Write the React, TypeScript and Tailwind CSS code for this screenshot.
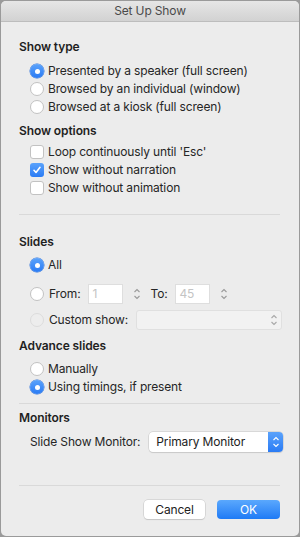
import React from 'react';

const font = { fontFamily: 'Inter, "Noto Sans", sans-serif' };

const Radio = ({ on, dim }: { on?: boolean; dim?: boolean }) =>
  on ? (
    <span className="w-[14px] h-[14px] rounded-full bg-gradient-to-b from-[#5aa2fb] to-[#2a7bf4] flex items-center justify-center shrink-0 shadow-[0_0_0_0.5px_#2a6fd8]">
      <span className="w-[5px] h-[5px] rounded-full bg-white" />
    </span>
  ) : (
    <span
      className={`w-[14px] h-[14px] rounded-full shrink-0 border ${dim ? 'bg-[#ededed] border-[#dcdcdc]' : 'bg-white border-[#c2c2c2]'}`}
    />
  );

const Check = ({ on }: { on?: boolean }) =>
  on ? (
    <span className="w-[14px] h-[14px] rounded-[3px] bg-gradient-to-b from-[#5aa2fb] to-[#2a7bf4] flex items-center justify-center shrink-0">
      <svg width="10" height="10" viewBox="0 0 10 10">
        <path d="M2 5.3 L4 7.5 L8 2.3" stroke="white" strokeWidth="1.6" fill="none" strokeLinecap="round" strokeLinejoin="round" />
      </svg>
    </span>
  ) : (
    <span className="w-[14px] h-[14px] rounded-[3px] bg-white border border-[#c2c2c2] shrink-0" />
  );

const Stepper = ({ color = '#9a9a9a' }: { color?: string }) => (
  <svg width="8" height="14" viewBox="0 0 8 14">
    <path d="M1.5 5 L4 2.5 L6.5 5" stroke={color} strokeWidth="1.1" fill="none" />
    <path d="M1.5 9 L4 11.5 L6.5 9" stroke={color} strokeWidth="1.1" fill="none" />
  </svg>
);

const Row = ({ children }: { children: React.ReactNode }) => (
  <div className="flex items-center gap-[4px] h-[18px] pl-[11px]">{children}</div>
);

const Heading = ({ children }: { children: React.ReactNode }) => (
  <div className="font-semibold text-[12px] tracking-[-0.1px] text-[#1f1f1f] h-[18px] leading-[18px]">{children}</div>
);

const Sep = () => <div className="h-px bg-[#d9d9d9] mr-[19px]" />;

export default function App() {
  return (
    <div className="w-[300px] h-[537px] bg-[#9a9a9a] p-px" style={font}>
      <div className="w-full h-full bg-[#ececec] rounded-[5px] overflow-hidden flex flex-col text-[12px] tracking-[-0.15px] text-[#262626]">
        <div className="h-[21px] bg-gradient-to-b from-[#e6e6e6] to-[#d2d2d2] border-b border-[#bdbdbd] flex items-center justify-center text-[12px] text-[#4a4a4a] shrink-0">
          Set Up Show
        </div>

        <div className="flex flex-col pl-[18px] pt-[16px]">
          <Heading>Show type</Heading>
          <div className="mt-[6px]">
            <Row><Radio on /><span>Presented by a speaker (full screen)</span></Row>
            <Row><Radio /><span>Browsed by an individual (window)</span></Row>
            <Row><Radio /><span>Browsed at a kiosk (full screen)</span></Row>
          </div>

          <div className="mt-[6px]"><Heading>Show options</Heading></div>
          <div className="mt-[3px]">
            <Row><Check /><span>Loop continuously until 'Esc'</span></Row>
            <Row><Check on /><span>Show without narration</span></Row>
            <Row><Check /><span>Show without animation</span></Row>
          </div>

          <div className="mt-[17px]"><Sep /></div>

          <div className="mt-[18px]"><Heading>Slides</Heading></div>
          <div className="mt-[5px]">
            <Row><Radio on /><span>All</span></Row>
          </div>
          <div className="flex items-center h-[20px] mt-[10px] pl-[11px]">
            <Radio />
            <span className="ml-[5px]">From:</span>
            <div className="ml-[8px] w-[35px] h-[20px] bg-white border border-[#dedede] text-[#c4c4c4] text-[12px] leading-[18px] pl-[3px]">1</div>
            <div className="ml-[10px] flex items-center"><Stepper /></div>
            <span className="ml-[9px]">To:</span>
            <div className="ml-[8px] w-[35px] h-[20px] bg-white border border-[#dedede] text-[#c4c4c4] text-[12px] leading-[18px] pl-[3px]">45</div>
            <div className="ml-[10px] flex items-center"><Stepper /></div>
          </div>
          <div className="flex items-center h-[20px] mt-[6px] pl-[11px]">
            <Radio dim />
            <span className="ml-[5px]">Custom show:</span>
            <div className="ml-[8px] w-[146px] h-[20px] bg-[#f2f2f2] border border-[#e0e0e0] rounded-[3px] flex items-center justify-end pr-[3px]">
              <Stepper color="#a8a8a8" />
            </div>
          </div>

          <div className="mt-[7px]"><Heading>Advance slides</Heading></div>
          <div className="mt-[5px]">
            <Row><Radio /><span>Manually</span></Row>
            <Row><Radio on /><span>Using timings, if present</span></Row>
          </div>

          <div className="mt-[7px]"><Sep /></div>

          <div className="mt-[5px]"><Heading>Monitors</Heading></div>
          <div className="flex items-center h-[20px] mt-[5px] pl-[11px]">
            <span>Slide Show Monitor:</span>
            <div className="ml-[9px] w-[134px] h-[20px] bg-white rounded-[4px] shadow-[0_0_0_0.5px_#c4c4c4,0_1px_1px_rgba(0,0,0,0.12)] flex items-center overflow-hidden">
              <span className="flex-1 pl-[7px] text-[#222]">Primary Monitor</span>
              <span className="w-[15px] h-full bg-gradient-to-b from-[#5aa2fb] to-[#2a7bf4] flex items-center justify-center">
                <Stepper color="#ffffff" />
              </span>
            </div>
          </div>

          <div className="mt-[33px]"><Sep /></div>

          <div className="flex justify-end gap-[12px] mr-[19px] mt-[14px]">
            <button className="w-[61px] h-[19px] bg-white rounded-[4px] shadow-[0_0_0_0.5px_#c4c4c4,0_1px_1px_rgba(0,0,0,0.15)] text-[12px] leading-[19px] text-[#222]">
              Cancel
            </button>
            <button className="w-[63px] h-[19px] rounded-[4px] bg-gradient-to-b from-[#5aa8fd] to-[#1d7af5] text-white text-[12px] leading-[19px]">
              OK
            </button>
          </div>
        </div>
      </div>
    </div>
  );
}
